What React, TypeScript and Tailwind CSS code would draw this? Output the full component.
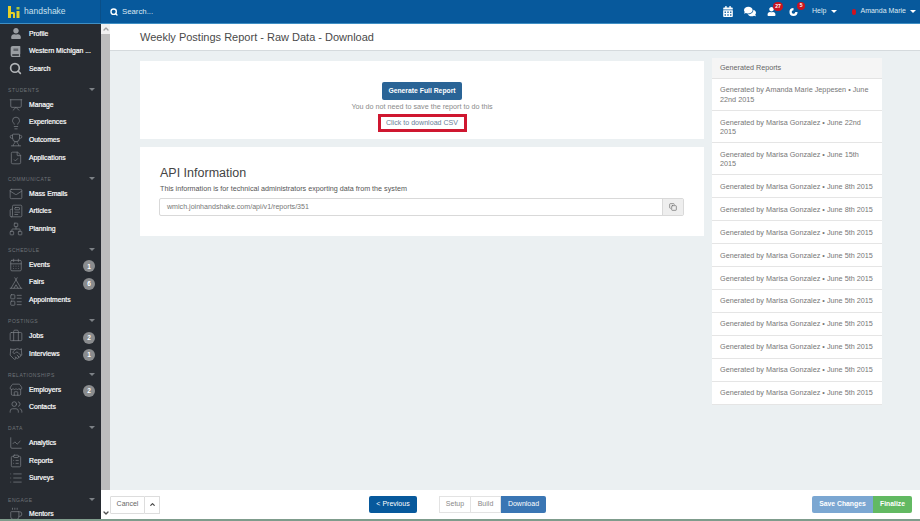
import { Fragment, type ReactNode } from 'react';
import { Copy, Search, ChartLine, ClipboardList, List, Lightbulb, Trophy, FileCheck, Mail, Newspaper, Network, CalendarDays, Tent, LayoutList, Briefcase, Handshake, Store, Users, Coffee, ChevronUp, ChevronDown, Presentation } from 'lucide-react';
import { FaUser, FaBook, FaComments, FaCalendarAlt } from 'react-icons/fa';

const font = 'font-["Liberation_Sans",Arial,sans-serif]';

type NavItem = { label: string; icon: ReactNode; badge?: number };
type NavSection = { title?: string; items: NavItem[] };

const iconClass = 'w-[14px] h-[14px] text-[#7f848a]';

const sections: NavSection[] = [
  {
    items: [
      { label: 'Profile', icon: <FaUser className="w-[10px] h-[11px] ml-[2px] text-[#9a9ea3]" /> },
      { label: 'Western Michigan ...', icon: <FaBook className="w-[11px] h-[11px] ml-px text-[#9a9ea3]" /> },
      { label: 'Search', icon: <Search className="w-[13px] h-[13px] text-[#b4b7ba]" strokeWidth={3} /> },
    ],
  },
  {
    title: 'STUDENTS',
    items: [
      { label: 'Manage', icon: <Presentation className={iconClass} strokeWidth={1.2} /> },
      { label: 'Experiences', icon: <Lightbulb className={iconClass} strokeWidth={1.2} /> },
      { label: 'Outcomes', icon: <Trophy className={iconClass} strokeWidth={1.2} /> },
      { label: 'Applications', icon: <FileCheck className={iconClass} strokeWidth={1.2} /> },
    ],
  },
  {
    title: 'COMMUNICATE',
    items: [
      { label: 'Mass Emails', icon: <Mail className={iconClass} strokeWidth={1.2} /> },
      { label: 'Articles', icon: <Newspaper className={iconClass} strokeWidth={1.2} /> },
      { label: 'Planning', icon: <Network className={iconClass} strokeWidth={1.2} /> },
    ],
  },
  {
    title: 'SCHEDULE',
    items: [
      { label: 'Events', icon: <CalendarDays className={iconClass} strokeWidth={1.2} />, badge: 1 },
      { label: 'Fairs', icon: <Tent className={iconClass} strokeWidth={1.2} />, badge: 6 },
      { label: 'Appointments', icon: <LayoutList className={iconClass} strokeWidth={1.2} /> },
    ],
  },
  {
    title: 'POSTINGS',
    items: [
      { label: 'Jobs', icon: <Briefcase className={iconClass} strokeWidth={1.2} />, badge: 2 },
      { label: 'Interviews', icon: <Handshake className={iconClass} strokeWidth={1.2} />, badge: 1 },
    ],
  },
  {
    title: 'RELATIONSHIPS',
    items: [
      { label: 'Employers', icon: <Store className={iconClass} strokeWidth={1.2} />, badge: 2 },
      { label: 'Contacts', icon: <Users className={iconClass} strokeWidth={1.2} /> },
    ],
  },
  {
    title: 'DATA',
    items: [
      { label: 'Analytics', icon: <ChartLine className={iconClass} strokeWidth={1.2} /> },
      { label: 'Reports', icon: <ClipboardList className={iconClass} strokeWidth={1.2} /> },
      { label: 'Surveys', icon: <List className={iconClass} strokeWidth={1.2} /> },
    ],
  },
  {
    title: 'ENGAGE',
    items: [{ label: 'Mentors', icon: <Coffee className={iconClass} strokeWidth={1.2} /> }],
  },
];

const reports = [
  'Generated by Amanda Marie Jeppesen • June 22nd 2015',
  'Generated by Marisa Gonzalez • June 22nd 2015',
  'Generated by Marisa Gonzalez • June 15th 2015',
  'Generated by Marisa Gonzalez • June 8th 2015',
  'Generated by Marisa Gonzalez • June 8th 2015',
  'Generated by Marisa Gonzalez • June 5th 2015',
  'Generated by Marisa Gonzalez • June 5th 2015',
  'Generated by Marisa Gonzalez • June 5th 2015',
  'Generated by Marisa Gonzalez • June 5th 2015',
  'Generated by Marisa Gonzalez • June 5th 2015',
  'Generated by Marisa Gonzalez • June 5th 2015',
  'Generated by Marisa Gonzalez • June 5th 2015',
  'Generated by Marisa Gonzalez • June 5th 2015',
];

function Caret({ className }: { className: string }) {
  return <span className={`w-0 h-0 border-x-[3px] border-x-transparent border-t-[3px] ${className}`} />;
}

function Sidebar() {
  return (
    <aside className="w-[101px] shrink-0 bg-[#272b31] pt-px overflow-hidden">
      {sections.map((section, i) => (
        <Fragment key={i}>
          {section.title && (
            <div className="h-[18.4px] flex items-end justify-between pl-2 pr-[6px] pb-[2px]">
              <span className="text-[5px] leading-[8px] tracking-[0.55px] text-[#6f7479]">{section.title}</span>
              <Caret className="border-t-[#7d8186] mb-[3px] border-x-[3px]" />
            </div>
          )}
          {section.items.map((item) => (
            <div key={item.label} className="h-[17.6px] flex items-center pl-2 pr-[6px]">
              <span className="w-[21px] shrink-0 flex items-center justify-start pl-px">{item.icon}</span>
              <span className="flex-1 text-[6.8px] text-white whitespace-nowrap [-webkit-text-stroke:0.2px_#fff]">{item.label}</span>
              {item.badge && (
                <span className="w-3 h-3 mt-[3px] rounded-full bg-[#8a8c8e] text-white text-[6.5px] font-bold flex items-center justify-center">
                  {item.badge}
                </span>
              )}
            </div>
          ))}
        </Fragment>
      ))}
    </aside>
  );
}

function Scrollbar() {
  return (
    <div className="w-[9px] shrink-0 bg-[#bdbdbd] flex flex-col">
      <div className="h-[10px] bg-[#f1f1f1] flex items-center justify-center">
        <ChevronUp className="w-2 h-2 text-[#a0a0a0]" strokeWidth={4} />
      </div>
      <div className="flex-1" />
      <div className="h-[29px] bg-white flex items-end justify-center pb-[2px]">
        <ChevronDown className="w-2 h-2 text-[#505050]" strokeWidth={4} />
      </div>
    </div>
  );
}

function Badge({ value, className }: { value: number; className: string }) {
  return (
    <span className={`absolute -top-[5px] rounded-full bg-[#c9141f] text-white text-[5px] font-bold flex items-center justify-center ${className}`}>
      {value}
    </span>
  );
}

function TopBar() {
  return (
    <header className="h-[24px] shrink-0 flex bg-[#07599c] border-b border-b-[#3f8fc4]">
      <div className="w-[101px] flex items-center pl-2 gap-[4px] border-r border-r-[#0a4f88]">
        <svg width="12" height="12" viewBox="0 0 12 12">
          <rect x="0" y="0" width="3" height="12" fill="#e3cf2a" />
          <path d="M3 6h2.5a1.5 1.5 0 0 1 1.5 1.5V12H5V8H3z" fill="#e3cf2a" />
          <rect x="8.5" y="1" width="3" height="2.5" fill="#a9c83a" />
          <rect x="8.5" y="5" width="3" height="7" fill="#e3cf2a" />
        </svg>
        <span className="text-[8.5px] text-[#c7e0ee]">handshake</span>
      </div>
      <div className="flex-1 flex items-center pl-[9px]">
        <Search className="w-[8px] h-[8px] text-white" strokeWidth={4} />
        <span className="ml-[4px] text-[7.8px] text-[#dbe7f1]">Search...</span>
        <div className="ml-auto flex items-center text-white">
          <FaCalendarAlt className="w-[10px] h-[11px] mr-[11px]" />
          <FaComments className="w-[12px] h-[11px] mr-[11px]" />
          <span className="relative mr-[13px]">
            <FaUser className="w-[9px] h-[9px]" />
            <Badge value={27} className="-right-[7px] w-[10px] h-[9px]" />
          </span>
          <span className="relative mr-[14px]">
            <svg width="9" height="10" viewBox="0 0 10 10">
              <path d="M5 .5a4.5 4.5 0 1 0 4.5 4.5H7a2 2 0 1 1-2-2z" fill="#fff" />
            </svg>
            <Badge value={5} className="-right-[7px] w-[8px] h-[8px]" />
          </span>
          <span className="text-[7px] text-[#dfe9f2]">Help</span>
          <Caret className="border-t-white ml-[5px] mr-[15px] border-x-[2.5px]" />
          <span className="w-[4px] h-[6px] rounded-full bg-[#d0121f] mr-[4px]" />
          <span className="text-[7px] text-[#dfe9f2]">Amanda Marie</span>
          <Caret className="border-t-white ml-[4px] mr-[4px] border-x-[2.5px]" />
        </div>
      </div>
    </header>
  );
}

export default function App() {
  return (
    <div className={`${font} w-[920px] h-[521px] flex flex-col overflow-hidden bg-white text-[#555]`}>
      <TopBar />
      <div className="flex-1 flex min-h-0">
        <Sidebar />
        <Scrollbar />
        <div className="flex-1 flex flex-col min-w-0">
          <div className="h-[27px] shrink-0 bg-white border-b border-b-[#d5dadd] flex items-center pl-[30px]">
            <h1 className="text-[11px] text-[#4a4a4a] font-normal">Weekly Postings Report - Raw Data - Download</h1>
          </div>
          <main className="flex-1 bg-[#ebf0f2] flex gap-2 pl-[30px] pr-[38px] pt-[7px] min-h-0">
            <div className="w-[564px] pt-[3px] flex flex-col gap-2">
              <section className="h-[78px] bg-white flex flex-col items-center pt-[21px]">
                <button className="h-[18px] w-[80px] rounded-[2px] bg-[#2a6496] text-white text-[6.8px] font-bold">
                  Generate Full Report
                </button>
                <p className="mt-[1px] text-[7.2px] leading-[12px] text-[#8a8a8a]">You do not need to save the report to do this</p>
                <a className="mt-px h-[18px] w-[89px] border-[3px] border-[#cf1730] flex items-center justify-center text-[7.1px] text-[#6a7f98]">
                  Click to download CSV
                </a>
              </section>
              <section className="h-[89px] bg-white px-[20px] pt-[17px]">
                <h2 className="text-[12.5px] leading-[18px] text-[#444] font-normal">API Information</h2>
                <p className="mt-px text-[7.2px] leading-[11px] text-[#555]">This information is for technical administrators exporting data from the system</p>
                <div className="mt-[4px] -ml-px h-[18px] flex border border-[#d9d9d9] rounded-[2px]">
                  <span className="flex-1 pl-[7px] flex items-center text-[7.1px] text-[#777]">wmich.joinhandshake.com/api/v1/reports/351</span>
                  <span className="w-[21px] bg-[#eeeeee] border-l border-l-[#d9d9d9] flex items-center justify-center">
                    <Copy className="w-[8px] h-[8px] text-[#666]" />
                  </span>
                </div>
              </section>
            </div>
            <aside className="w-[170px] self-start bg-white">
              <div className="h-[21px] bg-[#f5f5f5] border-b border-b-[#e3e3e3] flex items-center pl-2 text-[7.2px] text-[#666]">Generated Reports</div>
              {reports.map((report, i) => (
                <div key={i} className="px-2 py-[6.45px] border-b border-b-[#e5e5e5] text-[7.25px] leading-[9.1px] text-[#777]">
                  {report}
                </div>
              ))}
            </aside>
          </main>
          <footer className="h-[29px] shrink-0 bg-white flex items-center">
            <button className="h-[18px] w-[35px] border border-[#ddd] rounded-l-[1px] text-[7px] text-[#666]">Cancel</button>
            <button className="h-[18px] w-[15px] border border-l-0 border-[#ddd] flex items-center justify-center">
              <ChevronUp className="w-[7px] h-[7px] text-[#444]" strokeWidth={4} />
            </button>
            <button className="ml-[209px] h-[17px] w-[48px] rounded-[2px] bg-[#07599c] text-white text-[7px]">&lt; Previous</button>
            <div className="ml-[22px] flex h-[17px] text-[7px]">
              <span className="w-[32px] border border-[#e3e3e3] flex items-center justify-center text-[#888]">Setup</span>
              <span className="w-[30px] border border-l-0 border-[#e3e3e3] flex items-center justify-center text-[#888]">Build</span>
              <span className="w-[45px] bg-[#3a76b4] rounded-r-[2px] flex items-center justify-center text-white">Download</span>
            </div>
            <button className="ml-[266px] h-[17px] w-[61px] rounded-l-[2px] bg-[#7ba7d2] text-white text-[6.8px] font-bold">Save Changes</button>
            <button className="h-[17px] w-[39px] rounded-r-[2px] bg-[#62b962] text-white text-[6.8px] font-bold">Finalize</button>
          </footer>
        </div>
      </div>
      <div className="h-[2px] shrink-0 bg-[#7f9c8c]" />
    </div>
  );
}
